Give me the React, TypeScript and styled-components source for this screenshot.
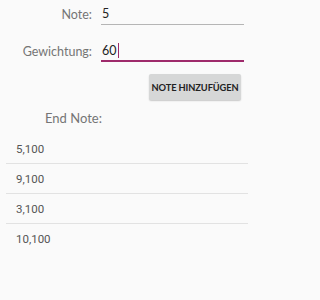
import React from 'react';
import styled, { createGlobalStyle } from 'styled-components';

interface FieldItem {
  label: string;
  value: string;
  focused?: boolean;
}

const GlobalStyle = createGlobalStyle`
  html, body {
    margin: 0;
    padding: 0;
    background: #fafafa;
  }
  body {
    font-family: Lato, 'Open Sans', sans-serif;
  }
`;

function App(): React.ReactElement {
  const fields: FieldItem[] = [
    { label: 'Note:', value: '5' },
    { label: 'Gewichtung:', value: '60', focused: true },
  ];
  const grades = ['5,100', '9,100', '3,100', '10,100'];

  return (
    <Screen>
      <GlobalStyle />
      <Form>
        {fields.map((field) => (
          <FieldRow key={field.label}>
            <Label>{field.label}</Label>
            <Input $focused={field.focused}>
              {field.value}
              {field.focused && <Caret />}
            </Input>
          </FieldRow>
        ))}
      </Form>
      <ButtonRow>
        <AddButton>NOTE HINZUFÜGEN</AddButton>
      </ButtonRow>
      <ResultLabel>End Note:</ResultLabel>
      <GradeList>
        {grades.map((grade, index) => (
          <GradeItem key={index} $last={index === grades.length - 1}>
            {grade}
          </GradeItem>
        ))}
      </GradeList>
    </Screen>
  );
}

export default App;

const Screen = styled.div`
  width: 254px;
  height: 300px;
  background: #fafafa;
  overflow: hidden;
`;

const Form = styled.div`
  display: flex;
  flex-direction: column;
  gap: 15px;
  padding: 3px 10px 0 0;
`;

const FieldRow = styled.div`
  display: grid;
  grid-template-columns: 92px 1fr;
  column-gap: 9px;
  align-items: center;
`;

const Label = styled.div`
  text-align: right;
  font-size: 12.5px;
  color: #757575;
`;

const Input = styled.div<{ $focused?: boolean }>`
  display: flex;
  align-items: center;
  height: 22px;
  box-sizing: border-box;
  padding-left: 1px;
  font-size: 12.5px;
  color: #222;
  border-bottom: ${(p) => (p.$focused ? '2px solid #9e2a6b' : '1px solid #b5b5b5')};
`;

const Caret = styled.span`
  display: inline-block;
  width: 1px;
  height: 15px;
  margin-left: 1px;
  background: #9e2a6b;
`;

const ButtonRow = styled.div`
  display: flex;
  justify-content: flex-end;
  padding: 12px 13px 0 0;
`;

const AddButton = styled.button`
  width: 92px;
  height: 26px;
  border: none;
  border-radius: 2px;
  background: #d6d7d7;
  box-shadow: 0 1px 1.5px rgba(0, 0, 0, 0.2);
  font-family: Lato, sans-serif;
  font-size: 9.3px;
  font-weight: 700;
  letter-spacing: -0.1px;
  color: #222;
  padding: 0;
  white-space: nowrap;
`;

const ResultLabel = styled.div`
  padding: 10px 0 0 45px;
  height: 24px;
  font-size: 13px;
  color: #757575;
`;

const GradeList = styled.ul`
  list-style: none;
  margin: 0 6px;
  padding: 0;
`;

const GradeItem = styled.li<{ $last?: boolean }>`
  height: 30px;
  box-sizing: border-box;
  display: flex;
  align-items: center;
  padding-left: 10px;
  font-family: Roboto, sans-serif;
  font-size: 11.5px;
  color: #555;
  border-bottom: ${(p) => (p.$last ? 'none' : '1px solid #e2e2e2')};
`;
